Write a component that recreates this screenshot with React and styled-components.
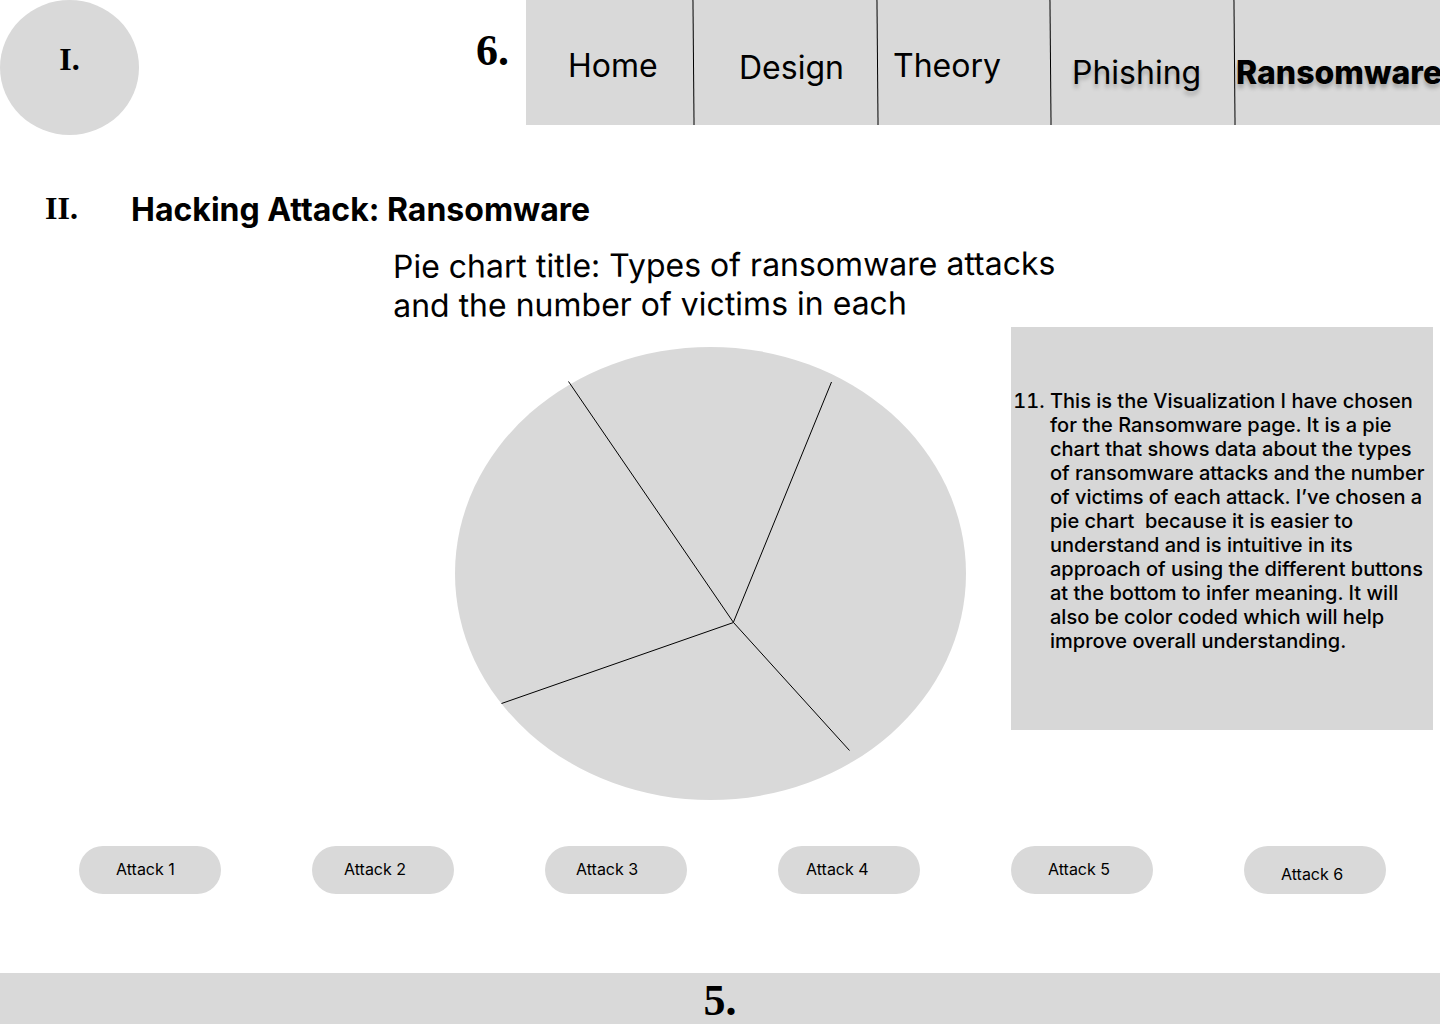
import React from "react";
import styled, { createGlobalStyle } from "styled-components";

const GlobalStyle = createGlobalStyle`
  *, *::before, *::after { box-sizing: border-box; }
  body {
    margin: 0;
    background: #ffffff;
    color: #000000;
    font-family: Inter, "Liberation Sans", sans-serif;
    overflow-x: hidden;
  }
`;

const Page = styled.div`
  display: flex;
  flex-direction: column;
  min-height: 100vh;
`;

const Header = styled.header`
  display: grid;
  grid-template-columns: 139fr 387fr 914fr;
  align-items: start;
`;

const Numeral = styled.span`
  font-family: "Liberation Serif", serif;
  font-size: ${(p) => (p.$large ? 44 : 32)}px;
  line-height: ${(p) => (p.$large ? 50 : 36)}px;
  font-weight: 700;
`;

const Logo = styled.a`
  display: flex;
  justify-content: center;
  height: 135px;
  padding-top: 41px;
  border-radius: 50%;
  background: #d9d9d9;
  color: inherit;
  text-decoration: none;
`;

const NavNumber = styled.div`
  display: flex;
  justify-content: flex-end;
  padding: 26px 17px 0 0;
`;

const Nav = styled.nav`
  display: grid;
  grid-template-columns: 167fr 184fr 173fr 184fr 206fr;
  height: 125px;
  background: #d9d9d9;
`;

const NavLink = styled.a`
  position: relative;
  min-width: 0;
  padding: ${(p) => p.$top}px 0 0 ${(p) => p.$left}px;
  color: inherit;
  font-size: 32px;
  line-height: 39px;
  font-weight: ${(p) => (p.$current ? 800 : 400)};
  text-decoration: none;
  white-space: nowrap;
  text-shadow: ${(p) => (p.$raised ? "0 4px 4px rgba(0, 0, 0, 0.25)" : "none")};

  &:not(:first-child)::before {
    content: "";
    position: absolute;
    top: 0;
    bottom: 0;
    left: 0;
    width: 1px;
    background: #000000;
    transform: skewX(0.5deg);
  }
`;

const Main = styled.main`
  display: flex;
  flex-direction: column;
`;

const TitleRow = styled.div`
  display: grid;
  grid-template-columns: 86px 1fr;
  align-items: start;
  padding: 55px 45px 0;
`;

const Title = styled.h1`
  margin: 0;
  font-size: 32px;
  line-height: 40px;
  font-weight: 700;
`;

const ChartTitle = styled.h2`
  width: 680px;
  max-width: 100%;
  margin: 17px 0 2px 27.3%;
  font-size: 32px;
  line-height: 39px;
  font-weight: 400;
  transform: rotate(-0.3deg);
  transform-origin: left center;
`;

const ChartRow = styled.div`
  display: grid;
  grid-template-columns: 455fr 511fr 45fr 422fr 7fr;
  align-items: start;
`;

const PieChart = styled.svg`
  grid-column: 2;
  display: block;
  width: 100%;
  height: auto;
  margin-top: 20px;
  overflow: visible;
`;

const Notes = styled.ol`
  grid-column: 4;
  margin: 0;
  padding: 62px 0 77px 39px;
  background: #d7d7d7;
  font-size: 20px;
  line-height: 24px;
  font-weight: 500;
  white-space: pre-wrap;
`;

const Attacks = styled.div`
  display: flex;
  justify-content: space-between;
  padding: 46px 54px 79px 79px;
`;

const AttackButton = styled.button`
  width: 142px;
  height: 48px;
  padding: ${(p) => (p.$low ? "8px 0 0" : "0 0 2px")} ${(p) => p.$left}px;
  border: 0;
  border-radius: 24px;
  background: #d9d9d9;
  color: inherit;
  font-family: inherit;
  font-size: 16px;
  line-height: 20px;
  font-weight: 400;
  text-align: left;
  white-space: nowrap;
`;

const Footer = styled.footer`
  display: flex;
  justify-content: center;
  align-items: flex-start;
  height: 51px;
  margin-top: auto;
  padding-top: 3px;
  background: #d9d9d9;
  overflow: hidden;
`;

const links = [
  { label: "Home", left: 42, top: 46 },
  { label: "Design", left: 46, top: 48 },
  { label: "Theory", left: 16, top: 46 },
  { label: "Phishing", left: 22, top: 53, raised: true },
  { label: "Ransomware", left: 2, top: 53, raised: true, current: true },
];

const attacks = [
  { label: "Attack 1", left: 37 },
  { label: "Attack 2", left: 32 },
  { label: "Attack 3", left: 31 },
  { label: "Attack 4", left: 28 },
  { label: "Attack 5", left: 37 },
  { label: "Attack 6", left: 37, low: true },
];

export default function App() {
  return (
    <Page>
      <GlobalStyle />
      <Header>
        <Logo href="#">
          <Numeral>I.</Numeral>
        </Logo>
        <NavNumber>
          <Numeral $large>6.</Numeral>
        </NavNumber>
        <Nav>
          {links.map((l) => (
            <NavLink
              key={l.label}
              href="#"
              $left={l.left}
              $top={l.top}
              $raised={l.raised}
              $current={l.current}
              aria-current={l.current ? "page" : undefined}
            >
              {l.label}
            </NavLink>
          ))}
        </Nav>
      </Header>
      <Main>
        <TitleRow>
          <Numeral>II.</Numeral>
          <Title>Hacking Attack: Ransomware</Title>
        </TitleRow>
        <ChartTitle>
          Pie chart title: Types of ransomware attacks and the number of victims in each
        </ChartTitle>
        <ChartRow>
          <PieChart viewBox="0 0 511 453" role="img" aria-label="Pie chart">
            <ellipse cx="255.5" cy="226.5" rx="255.5" ry="226.5" fill="#d9d9d9" />
            <path
              d="M113.5 34.5 278.5 275.5M376.5 35 278.5 275M46.5 356.5 278.5 275.5M394.5 403.5 278.5 275.5"
              fill="none"
              stroke="#000000"
            />
          </PieChart>
          <Notes start={11}>
            <li>
              {"This is the Visualization I have chosen for the Ransomware page. It is a pie chart that shows data about the types of ransomware attacks and the number of victims of each attack. I’ve chosen a pie chart  because it is easier to understand and is intuitive in its approach of using the different buttons at the bottom to infer meaning. It will also be color coded which will help improve overall understanding."}
            </li>
          </Notes>
        </ChartRow>
        <Attacks>
          {attacks.map((a) => (
            <AttackButton key={a.label} type="button" $left={a.left} $low={a.low}>
              {a.label}
            </AttackButton>
          ))}
        </Attacks>
      </Main>
      <Footer>
        <Numeral $large>5.</Numeral>
      </Footer>
    </Page>
  );
}
